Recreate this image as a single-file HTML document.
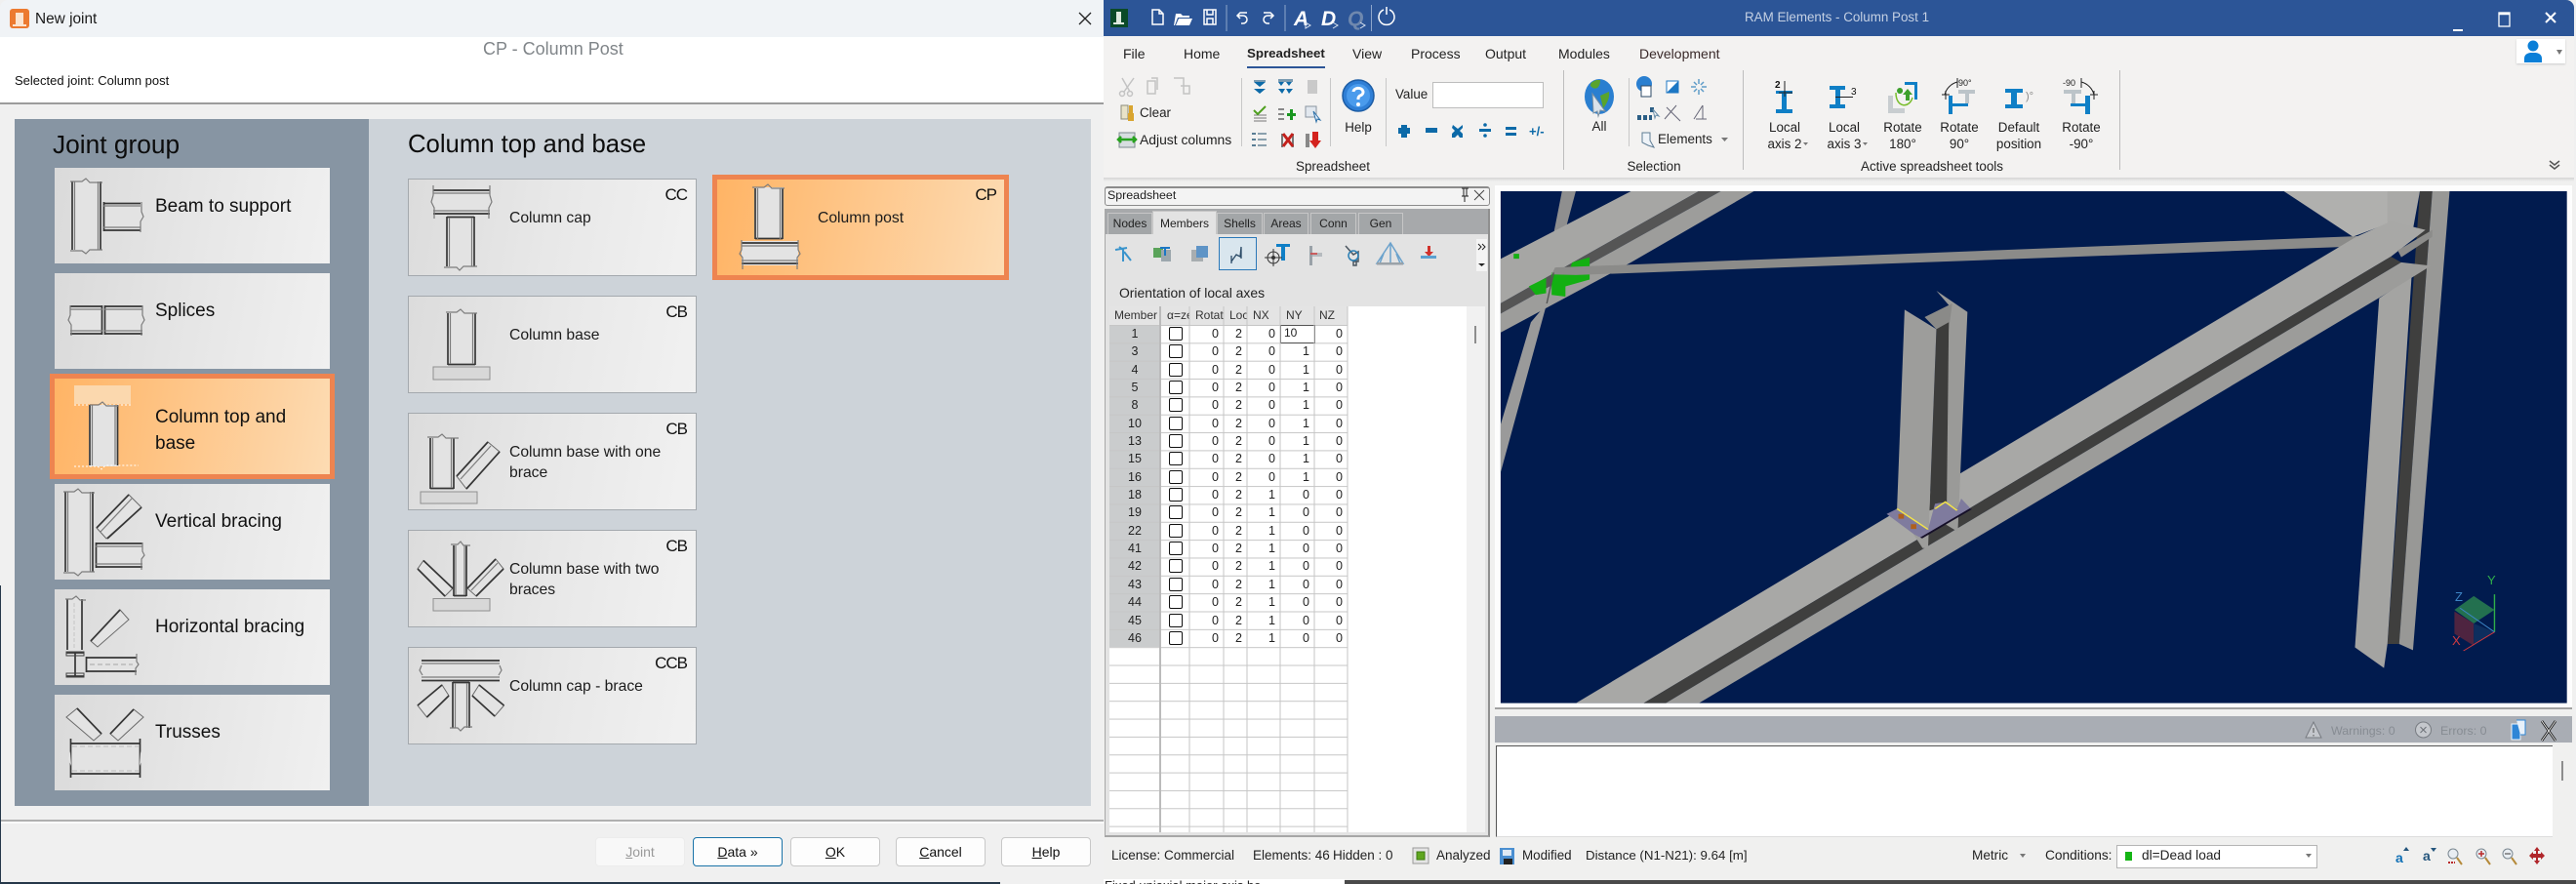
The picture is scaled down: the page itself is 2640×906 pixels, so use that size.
<!DOCTYPE html>
<html lang="en"><head><meta charset="utf-8"><title>New joint - RAM Elements</title>
<style>
html,body{margin:0;padding:0}
body{width:2640px;height:906px;overflow:hidden;position:relative;background:#f0f0f0;font-family:"Liberation Sans",sans-serif;color:#222}
div,span{box-sizing:border-box}
.a{position:absolute}
.t{position:absolute;white-space:nowrap;line-height:20px;font-size:13.4px}
.c{text-align:center;transform:translateX(-50%)}
.lc{position:absolute;left:56px;width:282px;height:98px;background:linear-gradient(100deg,#dadada,#e6e6e6 50%,#f0f0f0)}
.rc{position:absolute;left:418px;width:296px;height:100px;border:1px solid #a4a9ae;background:linear-gradient(100deg,#dcdcdc,#e8e8e8 50%,#f1f1f1)}
.sel{position:absolute;border:5px solid #ee8450;background:linear-gradient(100deg,#ffb465,#fdd3a3 80%,#fddcb3)}
.lt{font-size:19px;color:#111}
.rt{font-size:15.7px;color:#1c1c1c}
.cd{font-size:17px;letter-spacing:-1px;color:#111;text-align:right;width:50px}
.btn{position:absolute;top:858px;height:30px;border:1px solid #c8c8c8;border-radius:4px;background:#fdfdfd;font-size:14px;line-height:28px;text-align:center;color:#111}
u{text-decoration:underline}
.tab{position:absolute;top:218px;height:22px;background:#a3a6a8;border:1px solid #c6c6c6;border-bottom:0;font-size:12px;line-height:21px;text-align:center;color:#222}
#g{position:absolute;left:1137px;top:333px;display:grid;grid-template-columns:52px 30px 35px 24px 34px 35px 34px;grid-auto-rows:18.35px;font-size:12.5px;line-height:18.35px;color:#222}
#g b{font-weight:normal;text-align:center;display:block}
#g s{text-decoration:none;text-align:right;padding-right:5px;display:block}
#g i{display:block;position:relative}
#g i:after{content:"";position:absolute;left:9px;top:2px;width:14px;height:14px;border:1.3px solid #111;border-radius:2px;background:#fff;box-sizing:border-box}
.hd{position:absolute;top:314px;height:19px;line-height:19px;font-size:12px;color:#333;overflow:hidden;white-space:nowrap}
.f{fill:#e3e3e3}
.p{fill:#e3e3e3;stroke:#6a6a6a;stroke-width:1}
.d{stroke:#363636;stroke-width:1.7;fill:none}
.m{stroke:#7c7c7c;stroke-width:1.2;fill:none}
.bl{fill:#0f7fc6}
.gy{fill:#bcc4c9}
.k{stroke:#222;stroke-width:1;fill:none}
</style></head>
<body>
<!-- dialog -->
<div class="a" style="left:0;top:0;width:1131px;height:38px;background:#f0f3f6;border-radius:8px 0 0 0"></div>
<div class="a" style="left:0;top:38px;width:1131px;height:67px;background:#fff"></div>
<div class="a" style="left:0;top:105px;width:1131px;height:1.5px;background:#9c9c9c"></div>
<div class="a" style="left:0;top:107px;width:1131px;height:733px;background:#f0f0f0"></div>
<div class="a" style="left:15px;top:122px;width:363px;height:704px;background:#8795a3"></div>
<div class="a" style="left:378px;top:122px;width:740px;height:704px;background:#cdd3d9"></div>
<div class="a" style="left:0;top:840px;width:1131px;height:1.5px;background:#b0b0b0"></div>
<div class="a" style="left:0;top:842px;width:1131px;height:1.5px;background:#fbfbfb"></div>
<div class="a" style="left:0;top:904px;width:1025px;height:2px;background:#26384a"></div>
<div class="a" style="left:0;top:600px;width:1px;height:306px;background:#26384a"></div>

<span class="t" style="left:36px;top:10px;font-size:15.4px;color:#1a1a1a">New joint</span>
<span class="t" style="left:495px;top:40px;font-size:18px;color:#808589">CP - Column Post</span>
<span class="t" style="left:15px;top:73px;font-size:13px;color:#111">Selected joint: Column post</span>
<span class="t" style="left:54px;top:136px;font-size:26.3px;line-height:24px;color:#0c0c0c">Joint group</span>
<span class="t" style="left:418px;top:136px;font-size:25.7px;line-height:24px;color:#0c0c0c">Column top and base</span>

<div class="lc" style="top:172px"></div>
<div class="lc" style="top:280px"></div>
<div class="sel" style="left:51px;top:383px;width:292px;height:108px"></div>
<div class="lc" style="top:496px"></div>
<div class="lc" style="top:604px"></div>
<div class="lc" style="top:712px"></div>
<span class="t lt" style="left:159px;top:202px">Beam to support</span>
<span class="t lt" style="left:159px;top:309px">Splices</span>
<span class="t lt" style="left:159px;top:418px">Column top and</span>
<span class="t lt" style="left:159px;top:445px">base</span>
<span class="t lt" style="left:159px;top:525px">Vertical bracing</span>
<span class="t lt" style="left:159px;top:633px">Horizontal bracing</span>
<span class="t lt" style="left:159px;top:741px">Trusses</span>

<div class="rc" style="top:183px"></div>
<div class="rc" style="top:303px"></div>
<div class="rc" style="top:423px"></div>
<div class="rc" style="top:543px"></div>
<div class="rc" style="top:663px"></div>
<div class="sel" style="left:730px;top:179px;width:304px;height:108px"></div>
<span class="t rt" style="left:522px;top:214px">Column cap</span>
<span class="t rt" style="left:522px;top:334px">Column base</span>
<span class="t rt" style="left:522px;top:454px">Column base with one</span>
<span class="t rt" style="left:522px;top:475px">brace</span>
<span class="t rt" style="left:522px;top:574px">Column base with two</span>
<span class="t rt" style="left:522px;top:595px">braces</span>
<span class="t rt" style="left:522px;top:694px">Column cap - brace</span>
<span class="t rt" style="left:838px;top:214px">Column post</span>
<span class="t cd" style="left:654px;top:190px">CC</span>
<span class="t cd" style="left:654px;top:310px">CB</span>
<span class="t cd" style="left:654px;top:430px">CB</span>
<span class="t cd" style="left:654px;top:550px">CB</span>
<span class="t cd" style="left:654px;top:670px">CCB</span>
<span class="t cd" style="left:971px;top:190px">CP</span>

<div class="btn" style="left:610px;width:92px;border-color:#ececec;background:#f8f8f8;color:#9a9a9a"><u>J</u>oint</div>
<div class="btn" style="left:710px;width:92px;border-color:#1a73a8"><u>D</u>ata »</div>
<div class="btn" style="left:810px;width:92px"><u>O</u>K</div>
<div class="btn" style="left:918px;width:92px"><u>C</u>ancel</div>
<div class="btn" style="left:1026px;width:92px"><u>H</u>elp</div>

<!-- app -->
<div class="a" style="left:1131px;top:0;width:1507px;height:37px;background:#2c5597;border-radius:0 8px 0 0"></div>
<div class="a" style="left:1131px;top:37px;width:1507px;height:145px;background:#f3f2f1"></div>
<div class="a" style="left:1131px;top:182px;width:1507px;height:720px;background:#f0f0ef"></div>
<div class="a" style="left:1131px;top:182px;width:1507px;height:4px;background:linear-gradient(#d5d5d5,#f0f0ef)"></div>
<span class="t" style="left:1788px;top:8px;color:#c4d0e3">RAM Elements - Column Post 1</span>

<span class="t" style="left:1151px;top:45px;font-size:14px">File</span>
<span class="t" style="left:1213px;top:45px;font-size:14px">Home</span>
<span class="t" style="left:1278px;top:45px;font-size:13.3px;font-weight:bold">Spreadsheet</span>
<div class="a" style="left:1278px;top:67.5px;width:80px;height:2.5px;background:#2c5597"></div>
<span class="t" style="left:1386px;top:45px;font-size:14px">View</span>
<span class="t" style="left:1446px;top:45px;font-size:14px">Process</span>
<span class="t" style="left:1522px;top:45px;font-size:14px">Output</span>
<span class="t" style="left:1597px;top:45px;font-size:14px">Modules</span>
<span class="t" style="left:1680px;top:45px;font-size:14px;color:#3a2a2a">Development</span>

<span class="t" style="left:1168px;top:106px">Clear</span>
<span class="t" style="left:1168px;top:133px;font-size:13.9px">Adjust columns</span>
<span class="t c" style="left:1392px;top:121px">Help</span>
<span class="t" style="left:1430px;top:87px">Value</span>
<div class="a" style="left:1468px;top:84px;width:114px;height:27px;background:#fff;border:1px solid #bdbdbd"></div>
<span class="t c" style="left:1639px;top:120px">All</span>
<span class="t" style="left:1699px;top:133px;font-size:13.4px">Elements</span>
<span class="t c" style="left:1829px;top:121px">Local</span>
<span class="t c" style="left:1829px;top:138px">axis 2</span>
<span class="t c" style="left:1890px;top:121px">Local</span>
<span class="t c" style="left:1890px;top:138px">axis 3</span>
<span class="t c" style="left:1950px;top:121px">Rotate</span>
<span class="t c" style="left:1950px;top:138px">180°</span>
<span class="t c" style="left:2008px;top:121px">Rotate</span>
<span class="t c" style="left:2008px;top:138px">90°</span>
<span class="t c" style="left:2069px;top:121px">Default</span>
<span class="t c" style="left:2069px;top:138px">position</span>
<span class="t c" style="left:2133px;top:121px">Rotate</span>
<span class="t c" style="left:2133px;top:138px">-90°</span>
<span class="t c" style="left:1366px;top:161px">Spreadsheet</span>
<span class="t c" style="left:1695px;top:161px">Selection</span>
<span class="t c" style="left:1980px;top:161px">Active spreadsheet tools</span>
<div class="a" style="left:2579px;top:40px;width:50px;height:25px;background:#fff;box-shadow:0 1px 2px #ccc"></div>

<!-- spreadsheet panel -->
<div class="a" style="left:1132px;top:191px;width:395px;height:20px;background:#f3f3f3;border:1px solid #8b8b8b;border-top-width:2px;border-radius:3px"></div>
<span class="t" style="left:1135px;top:190px;font-size:12.4px">Spreadsheet</span>
<div class="a" style="left:1132px;top:214px;width:395px;height:644px;background:#e3e3e3;border:1px solid #a8a8a8;border-top:0;border-right:2px solid #8f8f8f;border-bottom:2px solid #a6a6a6"></div>
<div class="a" style="left:1133px;top:214px;width:392px;height:26px;background:#a7a9ab"></div>
<div class="tab" style="left:1135px;width:46px">Nodes</div>
<div class="tab" style="left:1181px;width:66px;top:216px;height:24px;background:#e3e3e3;line-height:25px">Members</div>
<div class="tab" style="left:1247px;width:47px">Shells</div>
<div class="tab" style="left:1295px;width:46px">Areas</div>
<div class="tab" style="left:1343px;width:47px">Conn</div>
<div class="tab" style="left:1392px;width:46px">Gen</div>
<div class="a" style="left:1249px;top:243px;width:39px;height:34px;background:#d9e6ee;border:1.5px solid #2a78b8"></div>
<div class="a" style="left:1513px;top:245px;width:11px;height:33px;background:#f4f4f4"></div>
<span class="t" style="left:1147px;top:290px;font-size:13.9px;color:#222">Orientation of local axes</span>

<div class="a" style="left:1137px;top:314px;width:366px;height:539px;background:#fff"></div>
<div class="a" style="left:1503px;top:314px;width:19px;height:539px;background:#f1f1f1"></div>
<div class="a" style="left:1511px;top:334px;width:2px;height:18px;background:#8d8d8d"></div>
<div class="a" style="left:1137px;top:314px;width:244px;height:19px;background:#e4e4e4"></div>
<div class="a" style="left:1137px;top:333px;width:52px;height:330px;background:#cacccd"></div>
<div class="a" style="left:1137px;top:333px;width:244px;height:520px;background:linear-gradient(#c6c6c6 1.2px,transparent 1.2px) 0 0/100% 18.35px"></div>
<span class="hd" style="left:1142px;width:46px">Member</span>
<span class="hd" style="left:1196px;width:23px">α=zero</span>
<span class="hd" style="left:1225px;width:29px">Rotat</span>
<span class="hd" style="left:1260px;width:18px">Loc</span>
<span class="hd" style="left:1284px;width:26px">NX</span>
<span class="hd" style="left:1318px;width:26px">NY</span>
<span class="hd" style="left:1352px;width:26px">NZ</span>
<div id="g">
<b>1</b><i></i><s>0</s><s>2</s><s>0</s><s></s><s>0</s>
<b>3</b><i></i><s>0</s><s>2</s><s>0</s><s>1</s><s>0</s>
<b>4</b><i></i><s>0</s><s>2</s><s>0</s><s>1</s><s>0</s>
<b>5</b><i></i><s>0</s><s>2</s><s>0</s><s>1</s><s>0</s>
<b>8</b><i></i><s>0</s><s>2</s><s>0</s><s>1</s><s>0</s>
<b>10</b><i></i><s>0</s><s>2</s><s>0</s><s>1</s><s>0</s>
<b>13</b><i></i><s>0</s><s>2</s><s>0</s><s>1</s><s>0</s>
<b>15</b><i></i><s>0</s><s>2</s><s>0</s><s>1</s><s>0</s>
<b>16</b><i></i><s>0</s><s>2</s><s>0</s><s>1</s><s>0</s>
<b>18</b><i></i><s>0</s><s>2</s><s>1</s><s>0</s><s>0</s>
<b>19</b><i></i><s>0</s><s>2</s><s>1</s><s>0</s><s>0</s>
<b>22</b><i></i><s>0</s><s>2</s><s>1</s><s>0</s><s>0</s>
<b>41</b><i></i><s>0</s><s>2</s><s>1</s><s>0</s><s>0</s>
<b>42</b><i></i><s>0</s><s>2</s><s>1</s><s>0</s><s>0</s>
<b>43</b><i></i><s>0</s><s>2</s><s>1</s><s>0</s><s>0</s>
<b>44</b><i></i><s>0</s><s>2</s><s>1</s><s>0</s><s>0</s>
<b>45</b><i></i><s>0</s><s>2</s><s>1</s><s>0</s><s>0</s>
<b>46</b><i></i><s>0</s><s>2</s><s>1</s><s>0</s><s>0</s>
</div>
<div class="a" style="left:1312px;top:333px;width:36px;height:19px;background:#fff;border:1px solid #555;font-size:12px;line-height:14px;padding-left:3px">10</div>

<!-- viewport frame -->
<div class="a" style="left:1532px;top:190px;width:1104px;height:535px;background:#fdfdfd"></div>
<div class="a" style="left:1532px;top:725px;width:1104px;height:2px;background:#a2a2a2"></div>
<svg class="a" style="left:1530px;top:190px" width="1110" height="550" viewBox="0 0 1568 1568" preserveAspectRatio="none">
<defs><clipPath id="vp"><rect x="11" y="17" width="1544" height="1496"/></clipPath></defs>
<g clip-path="url(#vp)">
<rect x="11" y="17" width="1544" height="1496" fill="#011b4e"/>
<polygon points="100,17 120,17 105,130 88,140" fill="#8f8f8f"/>
<polygon points="55,400 78,345 11,840 11,700" fill="#9a9a9a"/>
<polygon points="11,215 200,17 298,17 11,345" fill="#a6a6a4"/>
<polygon points="298,17 330,17 11,375 11,345" fill="#555"/>
<polygon points="330,17 378,17 200,225 11,430 11,375" fill="#9d9d9b"/>
<path d="M30 200h8v14h-8zM115 225l25-15v40h-30zM85 255h55v20l-35 20v30l-20-5zM52 295l25-25v45l-15 5z" fill="#13b012"/>
<polygon points="90,240 1255,148 1228,180 120,262 85,260" fill="#8b8b89"/>
<line x1="88" y1="255" x2="78" y2="345" stroke="#555" stroke-width="2"/>
<polygon points="1145,17 1298,17 1298,110 1245,150" fill="#b0b0ae"/>
<polygon points="1295,17 1342,17 1330,150 1295,110" fill="#a9a9a7"/>
<polygon points="1342,17 1360,17 1312,1340 1295,1340" fill="#3f3f3e"/>
<polygon points="1360,17 1385,17 1332,1358 1312,1340" fill="#989896"/>
<polygon points="1283,330 1330,265 1295,1340 1290,1410 1248,1350" fill="#a4a4a2"/>
<polygon points="120,1513 1250,150 1300,105 1350,130 1300,208 218,1513" fill="#a8a8a6"/>
<polygon points="218,1513 1300,208 1315,225 250,1513" fill="#3f3f3e"/>
<polygon points="250,1513 1315,225 1358,235 1290,320 298,1513" fill="#9c9c9a"/>
<polygon points="1310,190 1360,130 1360,150 1315,210" fill="#8c8c8a"/>
<polygon points="642,308 687,370 673,1012 655,990 660,350" fill="#9a9a98"/>
<polygon points="625,385 665,345 660,420 642,420" fill="#8a8a88"/>
<polygon points="642,420 660,400 657,935 632,950" fill="#3c3c3b"/>
<polygon points="596,363 642,420 630,1060 622,1060 585,945" fill="#9d9d9b"/>
<polygon points="570,960 585,945 630,1005 640,930 655,925 672,945 678,915 692,945 620,1030 610,1020" fill="#7f7b9e"/>
<line x1="620" y1="1030" x2="692" y2="945" stroke="#150f28" stroke-width="4"/>
<path d="M585 945L630 1005M640 945L655 925L672 950" stroke="#f2e34a" stroke-width="3" fill="none"/>
<path d="M587 960h8v14h-8zM605 990h8v14h-8z" fill="#b0601c"/>
<polygon points="1392,1240 1420,1200 1450,1240 1420,1280" fill="#23704f"/>
<polygon points="1392,1245 1420,1280 1420,1345 1392,1310" fill="#4e2440"/>
<polygon points="1420,1280 1450,1305 1420,1340" fill="#0d2e5e"/>
<path d="M1450 1195V1305" stroke="#2fae4b" stroke-width="2"/>
<path d="M1400 1235L1450 1305" stroke="#3d86c6" stroke-width="2"/>
<path d="M1450 1305L1405 1360" stroke="#d13a3f" stroke-width="2"/>
</g></svg>
<span class="t" style="left:2549px;top:585px;font-size:13px;color:#2fae4b">Y</span>
<span class="t" style="left:2516px;top:602px;font-size:13px;color:#3d86c6">Z</span>
<span class="t" style="left:2513px;top:647px;font-size:13px;color:#d13a3f">X</span>

<div class="a" style="left:1532px;top:734px;width:1104px;height:27px;background:#a9adb4"></div>
<div class="a" style="left:1533px;top:764px;width:1083px;height:94px;background:#fff;border-top:1.5px solid #555;border-left:1.5px solid #555;border-bottom:1px solid #ddd"></div>
<div class="a" style="left:2625px;top:780px;width:2px;height:20px;background:#8d8d8d"></div>
<span class="t" style="left:2389px;top:739px;font-size:12.4px;color:#878c93">Warnings: 0</span>
<span class="t" style="left:2501px;top:739px;font-size:12.4px;color:#878c93">Errors: 0</span>

<!-- status -->
<span class="t" style="left:1139px;top:867px;font-size:13.5px">License: Commercial</span>
<span class="t" style="left:1284px;top:867px;font-size:13.5px">Elements: 46</span>
<span class="t" style="left:1366px;top:867px;font-size:13.5px">Hidden : 0</span>
<span class="t" style="left:1472px;top:867px;font-size:13.5px">Analyzed</span>
<span class="t" style="left:1560px;top:867px;font-size:13.4px">Modified</span>
<span class="t" style="left:1625px;top:867px;font-size:13.3px">Distance (N1-N21): 9.64 [m]</span>
<span class="t" style="left:2021px;top:867px;font-size:13.6px">Metric</span>
<span class="t" style="left:2096px;top:867px;font-size:13.7px">Conditions:</span>
<div class="a" style="left:2169px;top:866px;width:206px;height:24px;background:#fff;border:1px solid #b5b5b5"></div>
<div class="a" style="left:2178px;top:873px;width:7px;height:9px;background:#15b515"></div>
<span class="t" style="left:2195px;top:867px;font-size:13.7px">dl=Dead load</span>
<div class="a" style="left:1131px;top:901px;width:247px;height:5px;overflow:hidden;background:#fff"><span class="t" style="left:1px;top:-3px;font-size:13px">Fixed uniaxial major axis be</span></div>
<div class="a" style="left:1378px;top:902px;width:1262px;height:4px;background:#4a4a4a"></div>

<!-- overlay icons -->
<svg class="a" style="left:0;top:0" width="2640" height="906" viewBox="0 0 2640 906">
<!-- dialog title icon and close -->
<rect x="10" y="9" width="20" height="20" rx="3" fill="#ec7a30"/>
<path d="M16 13h8v12h-8zM13 25h14v2H13z" fill="#fbe4d0"/>
<path d="M1106 13L1118 25M1118 13L1106 25" stroke="#222" stroke-width="1.3"/>

<!-- beam to support -->
<rect class="f" x="73" y="185" width="31" height="72"/><path class="d" d="M74 186V256M103 186V256"/><path class="m" d="M76.5 186V256M100.5 186V256M72 186H84L88 183L92 187H105M72 257H84L88 260L92 256H105"/>
<rect class="f" x="106" y="207" width="39" height="30"/><path class="d" d="M106 208.500H144M106 236H144M106.500 207V237"/><path class="m" d="M106 211H144M106 233H144M145 207V217L147 222L144 227V238"/>
<!-- splices -->
<rect class="f" x="72" y="313" width="33" height="30"/><rect class="f" x="107" y="313" width="39" height="30"/>
<path class="d" d="M72 314H105M72 342H105M107 314H146M107 342H146M104.500 313V343M107.500 313V343"/><path class="m" d="M72 317H105M72 339H105M107 317H146M107 339H146M72 313V323L70 328L73 333V344M146 313V323L148 328L145 333V344"/>
<!-- column top and base -->
<rect x="76" y="395" width="58" height="19" fill="#fbd8ae"/><path d="M76 415H136" stroke="#fff" stroke-dasharray="2 2" fill="none"/>
<rect class="f" x="91" y="415" width="30" height="63"/><path class="d" d="M92 415V477M120.500 415V477"/><path class="m" d="M94.500 415V477M118 415V477M92 415H101L105 412L109 416H121"/><path d="M76 478H100L104 481L108 477H142" stroke="#fff" stroke-dasharray="2 2" fill="none"/>
<!-- vertical bracing -->
<rect class="f" x="66" y="503" width="30" height="84"/><path class="d" d="M67 504V586M95 504V586"/><path class="m" d="M69.500 504V586M92.500 504V586M65 504H76L80 501L84 505H97M65 587H76L80 590L84 586H97"/>
<polygon class="p" points="132,507 145,520 109,552 99,541"/><path class="d" d="M132 507L99 541M145 520L110 552"/><path class="m" d="M135 511L103 545"/>
<rect class="f" x="98" y="556" width="48" height="26"/><path class="d" d="M98 557H146M98 581H146M98.500 556V582"/><path class="m" d="M98 560H146M98 578H146M146 556V565L148 569L145 573V584"/>
<!-- horizontal bracing -->
<rect class="f" x="68" y="613" width="17" height="54"/><path class="d" d="M69 614V666M84 614V666"/><path d="M76 618V664" stroke="#c6c6c6" stroke-dasharray="4 2" fill="none"/><path class="m" d="M67 614H74L78 611L82 615H88"/>
<path class="d" stroke-width="2" d="M68 669H86M68 693H86M77 669V693"/><rect x="68" y="668" width="18" height="4" fill="none" stroke="#444"/><rect x="68" y="690" width="18" height="4" fill="none" stroke="#444"/>
<polygon class="p" points="123,625 132,635 100,663 93,657"/><path class="d" d="M123 625L93 657"/>
<rect class="f" x="88" y="673" width="53" height="16"/><path class="d" d="M88 674H140M88 688H140M88.500 673V689"/><path d="M92 681H136" stroke="#c4c4c4" stroke-dasharray="5 3" stroke-width="2" fill="none"/><path class="m" d="M140 670V678L142 681L139 685V692"/>
<!-- trusses -->
<polygon class="p" points="79,726 104,752 96,759 68,735"/><polygon class="p" points="137,727 147,735 121,759 113,752"/><path class="d" d="M79 726L104 752M137 727L113 752" stroke-width="1.2"/>
<rect class="f" x="72" y="762" width="72" height="31"/><path class="d" d="M72 762H144M72 793H144M72.500 757V797M143.500 757V797"/><path d="M74 765H142M74 790H142" stroke="#bbb" stroke-dasharray="5 3" fill="none"/><path class="f" d="M72 770L70 778L73 785M144 770L146 778L143 785"/>

<!-- column cap -->
<rect class="f" x="444" y="194" width="58" height="26"/><path class="d" d="M444 195H502M444 219H502"/><path class="m" d="M444 198H502M444 216H502M444 190V200L442 207L445 213V224M502 190V200L504 207L501 213V224"/>
<rect class="f" x="457" y="222" width="30" height="52"/><path class="d" d="M458 222V273M486 222V273M458 222.500H486"/><path class="m" d="M460.500 223V273M483.500 223V273M455 274H468L471 277L475 273H489"/>
<!-- column base -->
<rect class="f" x="458" y="320" width="30" height="54"/><path class="d" d="M459 321V374M487 321V374M459 373.500H487"/><path class="m" d="M461.500 321V373M484.500 321V373M457 320H468L472 317L476 321H489"/>
<rect x="444" y="376" width="58" height="13" fill="#d8d8d8" stroke="#8f8f8f"/>
<!-- base one brace -->
<rect class="f" x="440" y="448" width="26" height="53"/><path class="d" d="M441 449V501M465 449V501M441 500.500H465"/><path class="m" d="M443.500 449V500M462.500 449V500M438 448H449L453 445L457 449H470"/>
<rect x="431" y="504" width="58" height="12" fill="#d8d8d8" stroke="#8f8f8f"/>
<polygon class="p" points="500,453 512,463 478,501 468,488"/><path class="d" d="M500 453L468 488M512 463L478 501"/><path class="m" d="M503 457L472 491"/>
<!-- base two braces -->
<rect class="f" x="464" y="558" width="15" height="53"/><path class="d" d="M465 559V611M478 559V611M465 610.500H478"/><path class="m" d="M467 559V610M476 559V610M462 558H469L472 555L475 559H482"/>
<rect x="444" y="613.500" width="58" height="12.500" fill="#d8d8d8" stroke="#8f8f8f"/>
<polygon class="p" points="434,574.500 464,603 456,611 428,583"/><path class="d" d="M434 574.500L464 603M428 583L456 611"/>
<polygon class="p" points="508,573 516,583 488,611 479,603"/><path class="d" d="M508 573L479 603M516 583L488 611"/><path class="m" d="M510 577L483 605"/>
<!-- cap brace -->
<rect class="f" x="432" y="676" width="80" height="22"/><path class="d" stroke-width="1.8" d="M432 677H512M432 697.500H512"/><path class="m" d="M432 680H512M432 694H512M432 682L430 687L433 692M512 682L514 687L511 692"/>
<rect class="f" x="463" y="699" width="19" height="47"/><path class="d" d="M464 699V746M481 699V746M464 699.500H481"/><path class="m" d="M466.500 700V746M478.500 700V746M461 746H469L472 749L476 745H484"/>
<polygon class="p" points="453,702 460,713 437.500,735 428,723"/><path class="d" d="M453 702L428 723M460 713L437.500 735"/>
<polygon class="p" points="491,702 516.500,723 507,734 484,713"/><path class="d" d="M491 702L516.500 723M484 713L507 734"/>
<!-- column post -->
<rect class="f" x="773" y="192" width="30" height="53"/><path class="d" d="M774 193V245M802 193V245M774 244.500H802"/><path class="m" d="M776.500 193V245M799.500 193V245M771 192H783L787 189L791 193H804"/>
<rect class="f" x="760" y="247" width="58" height="25"/><path class="d" d="M760 249H818M760 270H818"/><path class="m" d="M760 252H818M760 267H818M760 246V256L758 260L761 264V276M818 246V256L820 260L817 264V276"/>

<!-- QAT -->
<rect x="1138" y="9" width="18" height="19" fill="#0b4a28"/><path d="M1144 12h5v11h-5zM1141 23h11v2h-11z" fill="#dfe9df"/>
<g fill="none" stroke="#fff" stroke-width="1.5"><path d="M1181 10h7l4 4v11h-11zM1188 10v4h4"/><path d="M1234 10h12v15h-12zM1237 10v5h6v-5M1237 25v-6h6v6"/><path d="M1278 13h-7l-3 3 3 3M1268 16h6a4 4 0 0 1 0 8h-2"/><path d="M1295 13h7l3 3-3 3M1305 16h-6a4 4 0 0 0 0 8h2"/><path d="M1424 10a8 8 0 1 1-6 0M1421 7v8"/></g>
<path d="M1205 14h5l2 2h7v2h-12l-3 8h-1zM1208 19h14l-3 7h-14z" fill="#fff"/>
<path d="M1257 5V32M1317 5V32M1405.500 5V32" stroke="#8ea6cb" stroke-width="1"/>
<g font-family="Liberation Sans" font-size="21" font-weight="bold" font-style="italic"><text x="1326" y="26" fill="#fff">A</text><text x="1354" y="26" fill="#fff">D</text><text x="1381" y="26" fill="#6f88ae">Q</text></g>
<path d="M1338 23l5 3-5 3zM1366 23l5 3-5 3M1394 23l5 3-5 3" fill="none" stroke="#dbe4f0"/>
<path d="M2514 31H2524" stroke="#fff" stroke-width="2"/><rect x="2561" y="13" width="11" height="14" fill="none" stroke="#fff" stroke-width="1.300"/><path d="M2561 14h11" stroke="#fff" stroke-width="2.500"/>
<path d="M2609 13L2619 23M2619 13L2609 23" stroke="#fff" stroke-width="2"/>

<!-- ribbon separators -->
<path d="M1272.500 80V150M1363.500 80V150M1420.500 80V150M1669.500 80V150" stroke="#c8c8c8"/>
<path d="M1602.500 72V174M1786.500 72V174M2172.500 72V174" stroke="#bdbdbd"/>
<!-- cut copy paste -->
<g fill="none" stroke="#c3c3c3" stroke-width="1.500"><path d="M1150 80L1158 94M1162 80L1152 94"/><circle cx="1150" cy="96" r="2.500"/><circle cx="1158" cy="96" r="2.500"/><path d="M1176 83h8v13h-8zM1180 80h6v12"/><path d="M1203 80h10v16h6v-8h-9"/></g>
<!-- clear/adjust -->
<path d="M1149 108h7v14h-7z" fill="#e9e3c8" stroke="#8c8c7a"/><path d="M1157 108h4v8h1v8h-6v-8h1z" fill="#d9a530"/>
<rect x="1147" y="136" width="16" height="15" fill="#d7dde0" stroke="#7c8a90"/><path d="M1146 143h18M1149 140l-3 3 3 3M1161 140l3 3-3 3" stroke="#27a21f" stroke-width="2.500" fill="none"/>
<!-- sheet icons -->
<path d="M1285 84h12l-6 5zM1285 91h12l-6 5z" fill="#0c6aa8"/><path d="M1285 84h12v-2h-12z" fill="#7a9bb1"/>
<path d="M1310 84h6l-3 4zM1318 84h6l-3 4zM1310 91l4 5 3-5zM1318 91l3 5 4-5z" fill="#0c6aa8"/><rect x="1310" y="81" width="15" height="3" fill="#7a9bb1"/>
<rect x="1340" y="82" width="10" height="14" fill="#c9c9c9"/>
<path d="M1285 118h13M1285 121h13M1285 124h13" stroke="#777"/><path d="M1285 113l4 4 8-8" stroke="#4fa01f" stroke-width="2" fill="none"/>
<path d="M1310 112h6M1310 117h6M1310 122h6" stroke="#888" stroke-width="2"/><path d="M1319 116h3v-4h3v4h3v3h-3v4h-3v-4h-3z" fill="#19961f"/>
<rect x="1338" y="109" width="11" height="11" fill="#e2e8ef" stroke="#8a94a0"/><path d="M1346 114l7 9-3-1-1 3z" fill="#e8f2ff" stroke="#2a6ea6"/>
<path d="M1283 137h4M1283 143h4M1283 149h4" stroke="#5a7e95" stroke-width="2"/><path d="M1289 137h9M1289 143h9M1289 149h9" stroke="#8aa0ad" stroke-width="2"/>
<path d="M1313 137h2v14h-2zM1326 137h-2v14h2z" fill="#777"/><path d="M1315 137L1325 150M1325 137L1315 150" stroke="#c3211c" stroke-width="3"/>
<path d="M1338 137h4v14h-4z" fill="#888"/><path d="M1345 135h6v9h3l-6 8-6-8h3z" fill="#d4231e"/>
<!-- help -->
<ellipse cx="1392" cy="98" rx="16" ry="16" fill="#2f7fd6" stroke="#1d5da5" stroke-width="1.500"/><ellipse cx="1392" cy="98" rx="12" ry="12" fill="#4a9bec"/>
<path d="M1387 94a5 4 0 1 1 7 4c-2 1-2 2-2 4" stroke="#fff" stroke-width="3" fill="none"/><circle cx="1392" cy="107" r="2" fill="#fff"/>
<!-- operators -->
<g fill="#0c6aa8"><path d="M1436 128h6v3h3v6h-3v4h-6v-4h-3v-6h3z"/><rect x="1461" y="131" width="12" height="5"/><path d="M1489 128l5 4 5-4v3l-3 3 3 3v4h-3l-2-3-3 3h-3v-4l3-3-3-3z"/><rect x="1516" y="132" width="12" height="3"/><circle cx="1522" cy="128" r="1.800"/><circle cx="1522" cy="139" r="1.800"/><rect x="1543" y="130" width="11" height="3"/><rect x="1543" y="136" width="11" height="3"/></g>
<text x="1567" y="139" font-family="Liberation Sans" font-size="13" font-weight="bold" fill="#0c6aa8">+/-</text>
<!-- All -->
<ellipse cx="1639" cy="99" rx="15" ry="18" fill="#2a7fd0"/><path d="M1630 88c4 5 10 3 10-6l-4 0c-5 2-6 3-6 6zM1640 98l9-4c1 6-2 12-6 17z" fill="#59a42c"/><path d="M1632 96l13 18-5-1-2 6-1-5-4 2z" fill="#d9e2ea" stroke="#7a8fa0"/>
<!-- selection -->
<circle cx="1685" cy="86" r="8" fill="#2a7fd0"/><path d="M1682 88h10v11h-10z" fill="#fff" stroke="#2d4a66"/>
<path d="M1708 83h12v12h-12z" fill="#fff" stroke="#1c77c4"/><path d="M1720 83v12h-12z" fill="#1c77c4"/>
<g stroke="#5f9cc8" stroke-width="1.500"><path d="M1741 81v5M1741 92v5M1733 89h5M1744 89h5M1736 84l3 3M1746 84l-3 3M1736 94l3-3M1746 94l-3-3"/></g>
<path d="M1678 118h4v5h-4zM1684 118h4v5h-4zM1690 118h3v5h-3zM1691 110h4v5h-4z" fill="#2b5e85"/><path d="M1694 112l6 7-3-1-1 3z" fill="#fff" stroke="#6a8ea8"/>
<g stroke="#667" fill="none"><path d="M1706 122L1718 108M1713 115L1722 124M1708 110l8 8"/><path d="M1736 122L1745 108M1745 108V122M1738 122h11"/></g>
<path d="M1683 136h8v8l4 7-6-2-6-3z" fill="#eef3f8" stroke="#5f7d95"/>
<path d="M1764 141h7l-3.500 4z" fill="#777"/>
<!-- local axis icons -->
<path class="bl" d="M1820 93h17v3h-6v16h6v4h-17v-4h6V96h-6z"/><path class="k" d="M1829 83V99M1823 95H1837"/>
<text x="1819" y="90" font-family="Liberation Sans" font-size="10" font-weight="bold" fill="#111">2</text>
<path class="bl" d="M1875 88h16v4h-5v15h5v4h-16v-4h6V92h-6z"/><path class="k" d="M1881 99.500H1899"/>
<text x="1897" y="97" font-family="Liberation Sans" font-size="10" fill="#111">3</text>
<path d="M1935 98h5v13h12v5h-17z" fill="#c8cdd0"/><path d="M1952 84h13v18h-3V87h-10z" fill="#0f7fc6"/>
<path d="M1943 95c0 16 14 16 17 5" stroke="#79bd2c" stroke-width="1.500" fill="none"/><path d="M1947 96a3 3 0 1 1 .1 0z" fill="#3ca02c"/><path d="M1953 103v-6h-3l5-6 5 6h-3v6z" fill="#3ca02c"/>
<path class="bl" d="M1997 98h4v8h16v3h-16v8h-4z"/><path class="gy" d="M2007 92h17v4h-6v10h-4V96h-7z"/><path class="k" d="M1993 97a18 18 0 0 1 13-13M2006 80V90M1990 97h8M1994 93v9"/>
<text x="2007" y="88" font-family="Liberation Sans" font-size="9" fill="#222">90°</text>
<path class="bl" d="M2055 91h18v4h-6v12h6v4h-18v-4h6V95h-6z"/><text x="2076" y="102" font-family="Liberation Sans" font-size="11" fill="#888">)°</text>
<path class="bl" d="M2137 98h5v19h-5v-8h-15v-3h15z"/><path class="gy" d="M2115 92h18v4h-6v10h-4V96h-8z"/><path class="k" d="M2146 97a18 18 0 0 0-13-13M2133 80V90M2142 97h8M2146 93v9"/>
<text x="2114" y="88" font-family="Liberation Sans" font-size="9" fill="#222">-90</text>
<path d="M1848 146h5l-2.500 3zM1909 146h5l-2.500 3z" fill="#777"/>
<path d="M2613 165l5 4 5-4M2613 169l5 4 5-4" stroke="#555" stroke-width="1.500" fill="none"/>
<circle cx="2596" cy="47" r="5.500" fill="#0a7fd8"/><path d="M2587 64v-4c0-5 5-6 7-6h4c2 0 7 1 7 6v4z" fill="#0a7fd8"/><path d="M2620 51h6l-3 5z" fill="#777"/>

<!-- spreadsheet panel icons -->
<path d="M1498 193h7M1500 193v8M1503 193v8M1498 201h7M1501 201v6" stroke="#222" fill="none"/>
<path d="M1511 195L1521 205M1521 195L1511 205" stroke="#444"/>
<path d="M1147 253l4 3 0 12M1152 258l7 9M1143 256l12-2" stroke="#0f7fc6" stroke-width="2" fill="none" opacity=".8"/>
<path d="M1182 254h10v10h-10z" fill="#5aa35a"/><rect x="1190" y="256" width="10" height="12" fill="#9ca7ad"/><path d="M1189 254h10M1194 254v8" stroke="#1c77c4" stroke-width="2"/>
<rect x="1221" y="256" width="12" height="12" fill="#a8adb0"/><rect x="1226" y="252" width="12" height="12" fill="#5f94c6"/>
<path d="M1262 268l5-7 4 2 1-10M1272 253v12M1262 262v8" stroke="#2a4a66" stroke-width="1.300" fill="none"/>
<path class="bl" d="M1308 250h14v3h-5v14h-4v-14h-5z"/><circle cx="1305" cy="264" r="6" fill="none" stroke="#333"/><path d="M1296 264h18M1305 255v18" stroke="#333"/><circle cx="1305" cy="264" r="2" fill="#333"/>
<path d="M1342 252h3v20h-3z" fill="#9aa2a8"/><path d="M1345 259h10v4h-10z" fill="#b6bbbf"/><path d="M1343 260h7" stroke="#d24040" stroke-width="1.500"/>
<path d="M1379 252l8 9 5-3 0 10h-5v4h3v-6" fill="none" stroke="#4b5660" stroke-width="1.500"/><circle cx="1387" cy="262" r="5" fill="none" stroke="#2a7fb5" stroke-width="1.500"/>
<path d="M1411 270L1425 249L1438 270zM1425 249V270M1418 260l-4 10M1431 260l4 10" fill="none" stroke="#6ba2cc" stroke-width="1.500"/><rect x="1411" y="269" width="27" height="2.500" fill="#9aa2a8"/>
<path d="M1463 252h3v6h3l-4.500 5-4.500-5h3z" fill="#d1312b"/><rect x="1456" y="262" width="16" height="3" fill="#5aa0d0"/>
<path d="M1515 250l3 3-3 3M1519 250l3 3-3 3" stroke="#222" fill="none"/><path d="M1515 270h7l-3.500 3z" fill="#222"/>

<!-- grid vertical lines -->
<path d="M1189 314V853" stroke="#bbb" stroke-width="2"/>
<path d="M1219 314V853M1254 314V853M1278 314V853M1312 314V853M1347 314V853M1381 314V853" stroke="#c6c6c6"/>

<!-- status icons -->
<rect x="1448" y="869" width="16" height="16" fill="#e4e4e4" stroke="#9a9a9a"/><rect x="1452" y="873" width="8" height="8" fill="#5fa61f" stroke="#3d7a10"/>
<rect x="1537" y="869" width="15" height="17" fill="#4b8fd1"/><rect x="1540" y="871" width="9" height="6" fill="#dfe9f3"/><rect x="1541" y="880" width="9" height="6" fill="#222"/>
<path d="M2070 875h6l-3 4z" fill="#777"/><path d="M2363 875h6l-3 4z" fill="#777"/>
<!-- warnings -->
<path d="M2371 740L2379 756H2363Z" fill="#c4c7cc" stroke="#787c82"/><path d="M2371 746v5M2371 753v1.500" stroke="#555"/>
<circle cx="2483.500" cy="748" r="8" fill="#c4c7cc" stroke="#787c82"/><path d="M2480.500 745l6 6M2486.500 745l-6 6" stroke="#6d7177"/>
<path d="M2574 742h9v16h-9z" fill="#2f86d6" stroke="#f0f6fc"/><path d="M2579 738h9v15h-5" fill="#e8f1fa" stroke="#2f86d6"/>
<path d="M2605 739L2619 759M2619 739L2605 759" stroke="#111" stroke-width="2.500"/><path d="M2605 739L2619 759M2619 739L2605 759" stroke="#fff" stroke-width=".8"/>
<!-- bottom toolbar -->
<g font-family="Liberation Sans" font-size="14" font-weight="bold"><text x="2455" y="884" fill="#0f6fb5">a</text><text x="2483" y="882" fill="#24557c">a</text></g>
<path d="M2463 872l3-4 3 4zM2491 869h6l-3 4z" fill="#24557c"/>
<g fill="#e8edf2" stroke="#7a8790"><circle cx="2514" cy="875" r="5"/><circle cx="2543" cy="875" r="5"/><circle cx="2570" cy="875" r="5"/></g>
<path d="M2518 879l5 7M2547 879l5 7M2574 879l5 7" stroke="#b58a3a" stroke-width="2"/>
<path d="M2509 884h7" stroke="#b92b2b" stroke-width="2" stroke-dasharray="2 1"/><path d="M2540 875h6M2543 872v6" stroke="#b92b2b" stroke-width="1.500"/><path d="M2567 875h6" stroke="#777" stroke-width="1.500"/>
<path d="M2600 868l3 4h-2v3h3v-2l4 4-4 4v-2h-3v3h2l-3 4-3-4h2v-3h-3v2l-4-4 4-4v2h3v-3h-2z" fill="#b0262a"/>
</svg>
</body></html>
